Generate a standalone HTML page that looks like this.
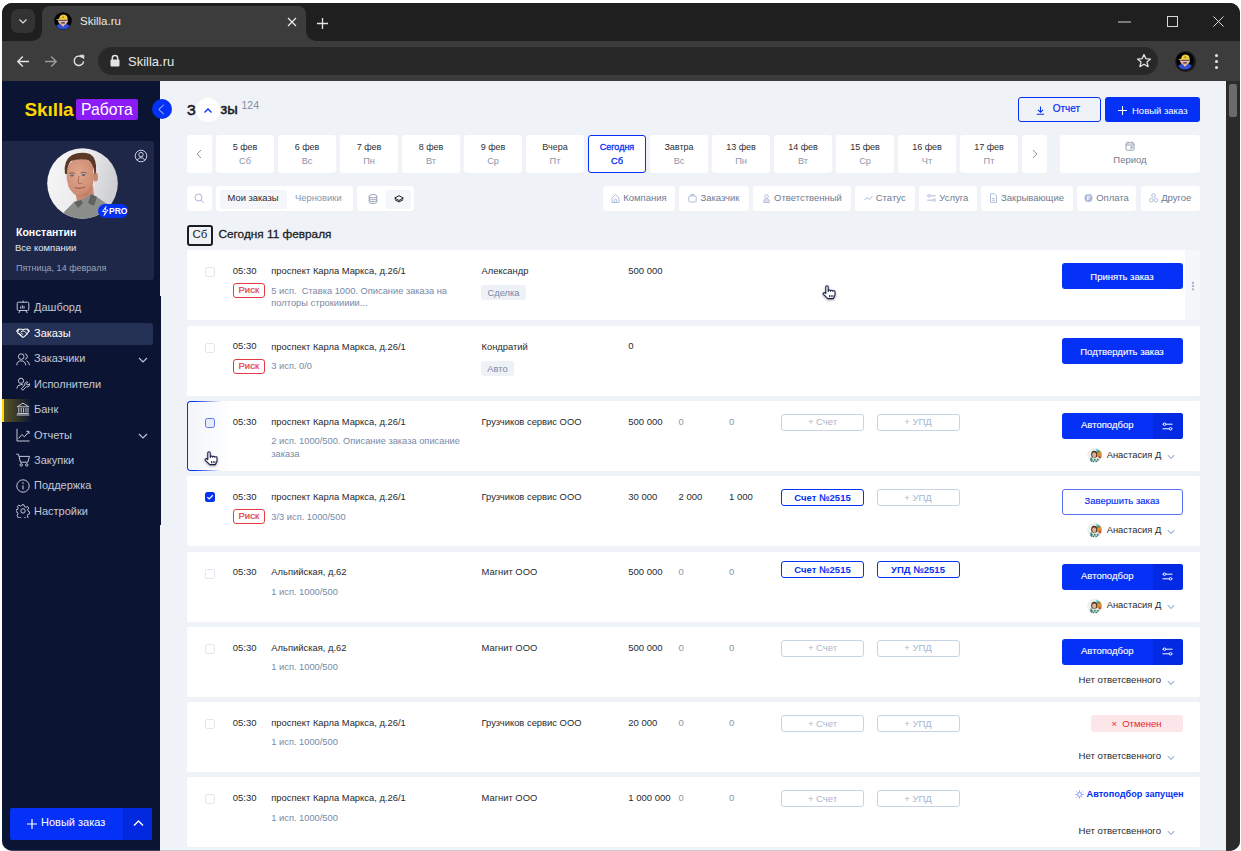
<!DOCTYPE html>
<html><head><meta charset="utf-8">
<style>
*{box-sizing:border-box;margin:0;padding:0}
html,body{width:1241px;height:851px;overflow:hidden;background:#fff;font-family:"Liberation Sans",sans-serif}
.a{position:absolute}
#win{position:absolute;left:0;top:0;width:1241px;height:851px;clip-path:inset(3px 1px 0.3px 2px round 10px);background:#202020}
#tabs{left:0;top:0;width:1241px;height:41px;background:#1f1f1f}
#tab{left:42px;top:6px;width:264px;height:35px;background:#3c3c3c;border-radius:8px 8px 0 0}
#toolbar{left:0;top:41px;width:1241px;height:40px;background:#3c3c3c}
#omni{left:98px;top:47px;width:1060px;height:28px;background:#282828;border-radius:14px}
#page{left:2px;top:81px;width:1224px;height:770px;background:#eff2f7;overflow:hidden}
#sb{left:2px;top:81px;width:158px;height:770px;background:#0b1533}
#scroll{left:1226px;top:81px;width:15px;height:770px;background:#2b2b2b}
#thumb{left:1229px;top:84px;width:8px;height:33px;background:#6b6b6b;border-radius:2px}
.t{white-space:nowrap;line-height:1}
</style></head><body>
<div id="win">
 <div class="a" id="tabs"></div>
 <div class="a" style="left:30px;top:30px;width:288px;height:11px;background:#3c3c3c"></div>
 <div class="a" style="left:12px;top:21px;width:30px;height:20px;background:#1f1f1f;border-bottom-right-radius:10px"></div>
 <div class="a" style="left:306px;top:21px;width:30px;height:20px;background:#1f1f1f;border-bottom-left-radius:10px"></div>
 <div class="a" style="left:11px;top:9px;width:24px;height:24px;background:#333;border-radius:7px"></div>
 <svg class="a" style="left:17px;top:15px" width="12" height="12" viewBox="0 0 12 12"><path d="M2.5 4.5L6 8l3.5-3.5" fill="none" stroke="#ddd" stroke-width="1.2"/></svg>
 <div class="a" id="tab"></div>
 <div class="a" style="left:55px;top:13px;width:16px;height:16px;border-radius:8px;background:#111"></div>
 <div class="a t" style="left:80px;top:15.5px;font-size:11.5px;color:#e8e8e8">Skilla.ru</div>
 <svg class="a" style="left:287px;top:17px" width="10" height="10" viewBox="0 0 10 10"><path d="M1 1l8 8M9 1l-8 8" stroke="#e6e6e6" stroke-width="1.3"/></svg>
 <svg class="a" style="left:316.5px;top:17.5px" width="11" height="11" viewBox="0 0 11 11"><path d="M5.5 0v11M0 5.5h11" stroke="#e6e6e6" stroke-width="1.3"/></svg>
 <!-- window controls -->
 <svg class="a" style="left:1118px;top:21px" width="13" height="2"><path d="M0 1h13" stroke="#d8d8d8" stroke-width="1"/></svg>
 <svg class="a" style="left:1166.5px;top:16px" width="11" height="11"><rect x="0.5" y="0.5" width="10" height="10" fill="none" stroke="#d8d8d8" stroke-width="1"/></svg>
 <svg class="a" style="left:1212.5px;top:16px" width="11" height="11"><path d="M0.5 0.5l10 10M10.5 0.5l-10 10" stroke="#d8d8d8" stroke-width="1"/></svg>
 <div class="a" id="toolbar"></div>
 <div class="a" id="omni"></div>
 <div class="a" id="page"></div>
 <div class="a" id="sb"></div>

 <!-- toolbar icons -->
 <svg class="a" style="left:16px;top:55px" width="14" height="13" viewBox="0 0 14 13"><path d="M13 6.5H1.8M6.8 1.5L1.8 6.5l5 5" fill="none" stroke="#e3e3e3" stroke-width="1.4"/></svg>
 <svg class="a" style="left:44px;top:55px" width="14" height="13" viewBox="0 0 14 13"><path d="M1 6.5h11.2M7.2 1.5l5 5-5 5" fill="none" stroke="#9a9a9a" stroke-width="1.4"/></svg>
 <svg class="a" style="left:72px;top:54px" width="14" height="14" viewBox="0 0 14 14"><path d="M11.6 7.2A4.7 4.7 0 1 1 10.2 3.4" fill="none" stroke="#e3e3e3" stroke-width="1.4"/><path d="M8.2 1.2h3.6v3.6z" fill="#e3e3e3" stroke="#e3e3e3" stroke-width="0.8"/></svg>
 <svg class="a" style="left:110px;top:54px" width="10" height="13" viewBox="0 0 10 13"><path d="M2.3 6V4.2a2.7 2.7 0 0 1 5.4 0V6" fill="none" stroke="#e3e3e3" stroke-width="1.5"/><rect x="0.5" y="5.5" width="9" height="7" rx="1" fill="#e3e3e3"/></svg>
 <div class="a t" style="left:128px;top:54.5px;font-size:13px;color:#e8e8e8">Skilla.ru</div>
 <svg class="a" style="left:1136px;top:53px" width="16" height="16" viewBox="0 0 16 16"><path d="M8 1.5l1.9 4.2 4.6.4-3.5 3 1.1 4.5L8 11.2l-4.1 2.4 1.1-4.5-3.5-3 4.6-.4z" fill="none" stroke="#e3e3e3" stroke-width="1.3" stroke-linejoin="round"/></svg>
 <div class="a" style="left:1174.5px;top:50.8px;width:21px;height:21px;border-radius:50%;background:#1b1b1b"></div>
 <svg class="a" style="left:1176px;top:52.3px" width="18" height="18" viewBox="0 0 18 18"><defs><clipPath id="fv2"><circle cx="9" cy="9" r="8.6"/></clipPath></defs><circle cx="9" cy="9" r="8.7" fill="#000"/><g clip-path="url(#fv2)"><path d="M1.5 18 L2.5 13.5 Q5 11.8 7 11.5 L9 15.5 L11 11.5 Q13.5 11.8 15.5 13.5 L16.5 18z" fill="#2f4fd6"/><path d="M4.3 8.5 Q4.3 7.2 5.6 7.2 L12.4 7.2 Q13.7 7.2 13.7 8.5 Q14.3 9.8 13.3 10.6 Q12.3 12.5 11 12.5 L9 15.3 L7 12.5 Q5.7 12.5 4.7 10.6 Q3.7 9.8 4.3 8.5z" fill="#e7b8a6"/><path d="M5.2 7.6h7.6v1.2H5.2z" fill="#27326b"/><path d="M7.2 10.2h3.6v1.2H7.2z" fill="#3b2f2f"/><path d="M2.2 7.6 Q3.5 6.6 5.2 6.8 Q5.5 3 9 2.6 Q13 2.6 13.6 6 L13.6 7.8 L4.8 7.8 Q3 8.2 2.2 7.6z" fill="#f0cd3a"/><ellipse cx="9.2" cy="5.2" rx="1.1" ry="0.6" fill="#8a6b12"/></g></svg>
 <div class="a" style="left:1215px;top:54px;width:3px;height:3px;border-radius:50%;background:#e3e3e3"></div>
 <div class="a" style="left:1215px;top:60px;width:3px;height:3px;border-radius:50%;background:#e3e3e3"></div>
 <div class="a" style="left:1215px;top:66px;width:3px;height:3px;border-radius:50%;background:#e3e3e3"></div>
 <!-- favicon -->
 <svg class="a" style="left:54.3px;top:12.3px" width="18" height="18" viewBox="0 0 18 18"><defs><clipPath id="fv1"><circle cx="9" cy="9" r="8.6"/></clipPath></defs><circle cx="9" cy="9" r="8.7" fill="#000"/><g clip-path="url(#fv1)"><path d="M1.5 18 L2.5 13.5 Q5 11.8 7 11.5 L9 15.5 L11 11.5 Q13.5 11.8 15.5 13.5 L16.5 18z" fill="#2f4fd6"/><path d="M4.3 8.5 Q4.3 7.2 5.6 7.2 L12.4 7.2 Q13.7 7.2 13.7 8.5 Q14.3 9.8 13.3 10.6 Q12.3 12.5 11 12.5 L9 15.3 L7 12.5 Q5.7 12.5 4.7 10.6 Q3.7 9.8 4.3 8.5z" fill="#e7b8a6"/><path d="M5.2 7.6h7.6v1.2H5.2z" fill="#27326b"/><path d="M7.2 10.2h3.6v1.2H7.2z" fill="#3b2f2f"/><path d="M2.2 7.6 Q3.5 6.6 5.2 6.8 Q5.5 3 9 2.6 Q13 2.6 13.6 6 L13.6 7.8 L4.8 7.8 Q3 8.2 2.2 7.6z" fill="#f0cd3a"/><ellipse cx="9.2" cy="5.2" rx="1.1" ry="0.6" fill="#8a6b12"/></g></svg>

 <!-- SIDEBAR -->
 <div class="a t" style="left:24.5px;top:100px;font-size:19px;font-weight:bold;color:#ffd600;letter-spacing:-0.1px">Skılla</div>
 <div class="a" style="left:76px;top:99px;width:62px;height:21px;background:#8b1cf6;border-radius:2px"></div>
 <div class="a t" style="left:81px;top:102.1px;font-size:15.7px;color:#fff">Работа</div>
 <div class="a" style="left:152px;top:99px;width:20px;height:20px;border-radius:50%;background:#0530f5"></div>
 <svg class="a" style="left:157px;top:104px" width="9" height="11" viewBox="0 0 9 11"><path d="M6.8 0.8L1.8 5.5l5 4.7" fill="none" stroke="#c9d3ff" stroke-width="1"/></svg>

 <div class="a" style="left:2px;top:141px;width:152px;height:139px;background:#1e2747;border-radius:0 3px 3px 0"></div>
 <svg class="a" style="left:47px;top:148px" width="71" height="71" viewBox="0 0 71 71">
  <defs><clipPath id="av"><circle cx="35.5" cy="35.5" r="35.3"/></clipPath>
  <linearGradient id="avbg" x1="0" y1="0" x2="1" y2="0.3"><stop offset="0" stop-color="#f7f7f8"/><stop offset="0.55" stop-color="#ececee"/><stop offset="1" stop-color="#cfd0d4"/></linearGradient>
  <radialGradient id="face" cx="0.45" cy="0.4" r="0.65"><stop offset="0" stop-color="#e0a68c"/><stop offset="0.8" stop-color="#cf8f76"/><stop offset="1" stop-color="#b8735e"/></radialGradient></defs>
  <g clip-path="url(#av)">
   <rect width="71" height="71" fill="url(#avbg)"/>
   <path d="M28 42 L30 53 L40 56 L47 48 L46 38z" fill="#c8876f"/>
   <path d="M10 71 L19 62 L27 54 L34 52 L44 46 L50 49 L60 56 L68 64 L71 71z" fill="#8b8f8c"/>
   <path d="M27 54 L31 60 L36 55 L34 52z M44 46 L41 55 L47 58 L50 49z" fill="#5f6461"/>
   <ellipse cx="48.5" cy="29" rx="2.6" ry="4.5" fill="#c98a72"/>
   <path d="M19.5 24 Q19 40 27 46 Q33 50 40 47 Q46 42 46.5 30 L46 16 Q40 10 30 11 Q21 13 19.5 24z" fill="url(#face)"/>
   <path d="M18 26 Q16 12 25 7 Q34 3 43 6 Q50 10 49 24 L47.5 27 Q47 15 41 12 Q32 10 24 13 Q20 17 20 26z" fill="#5a3a27"/>
   <path d="M22 25.5q3-1.5 6 0M33.5 25q3-1.5 6 0" stroke="#7d5a48" stroke-width="0.9" fill="none"/>
   <ellipse cx="25" cy="27.5" rx="1.8" ry="0.9" fill="#53687c"/><ellipse cx="36.5" cy="27" rx="1.8" ry="0.9" fill="#53687c"/>
   <path d="M32 28 L31 35 Q33 36.5 35 35" stroke="#a96a56" stroke-width="0.9" fill="none"/>
   <path d="M28 39.5 Q32.5 41.5 38 39" stroke="#a15c50" stroke-width="1.3" fill="none"/>
  </g>
 </svg>
 <div class="a" style="left:98px;top:204px;width:30px;height:14px;border-radius:7px;background:#0530f5"></div>
 <svg class="a" style="left:101px;top:206px" width="8" height="10" viewBox="0 0 8 10"><path d="M5 0.5L1.5 5.5h3L3 9.5 7 4H4z" fill="none" stroke="#fff" stroke-width="0.9" stroke-linejoin="round"/></svg>
 <div class="a t" style="left:109px;top:207px;font-size:8.5px;font-weight:bold;color:#fff">PRO</div>
 <svg class="a" style="left:134px;top:149px" width="14" height="14" viewBox="0 0 14 14"><circle cx="7" cy="7" r="5.8" fill="none" stroke="#c9cede" stroke-width="1"/><circle cx="7" cy="5.6" r="2.2" fill="none" stroke="#c9cede" stroke-width="1"/><path d="M3.2 11.2Q4.5 8.6 7 8.6T10.8 11.2" fill="none" stroke="#c9cede" stroke-width="1"/></svg>
 <div class="a t" style="left:16px;top:227px;font-size:10.5px;font-weight:bold;color:#fff">Константин</div>
 <div class="a t" style="left:15px;top:243px;font-size:9.5px;color:#e4e7ef">Все компании</div>
 <div class="a t" style="left:16px;top:263.5px;font-size:9px;color:#9ba3b8">Пятница, 14 февраля</div>

 <div class="a" style="left:160px;top:296px;width:1px;height:229px;background:#0b1533"></div>
 <div class="a" style="left:2px;top:323px;width:151px;height:22px;background:#253154;border-radius:0 3px 3px 0"></div>
 <div class="a" style="left:2px;top:399px;width:30px;height:23px;background:linear-gradient(90deg,rgba(255,214,0,0.35),rgba(255,214,0,0))"></div>
 <div class="a" style="left:2px;top:399px;width:2px;height:23px;background:#ffd600"></div>
<!-- MENU -->
 <svg class="a" style="left:15.5px;top:300.0px" width="14" height="14" viewBox="0 0 14 14"><rect x="1.2" y="2.2" width="11.6" height="8.3" rx="1.2" fill="none" stroke="#c3c8d6" stroke-width="1"/><path d="M4.6 8.2V7M6.3 8.2V5.6M8 8.2V6.3M7 1v1.2M4.2 10.5l-1.2 2.3M9.8 10.5l1.2 2.3" stroke="#c3c8d6" stroke-width="1" fill="none" stroke-linecap="round"/></svg>
 <div class="a t" style="left:34px;top:301.8px;font-size:11px;color:#c3c8d6">Дашборд</div>
 <svg class="a" style="left:15.5px;top:326.0px" width="14" height="14" viewBox="0 0 14 14"><path d="M0.6 5.2L2.6 3.2M13.4 5.2L11.4 3.2" stroke="#ffffff" stroke-width="1.1" fill="none" stroke-linecap="round"/><path d="M2.4 3.6Q4.5 2.4 6.6 3.6L7.4 3.6Q9.5 2.4 11.6 3.6L12.6 5.8Q11 8.5 8.2 10.6Q7 11.5 6 10.7L1.6 6.8z" fill="none" stroke="#ffffff" stroke-width="1.1" stroke-linejoin="round"/><path d="M5.2 5.6Q7 4.2 8.6 5.4L11 7.6M3.6 7.6l1.3 1.2M5 6.8l1.6 1.6M4.8 9.2l0.8 0.7" stroke="#ffffff" stroke-width="1" fill="none" stroke-linecap="round"/></svg>
 <div class="a t" style="left:34px;top:327.8px;font-size:11px;color:#ffffff">Заказы</div>
 <svg class="a" style="left:15.5px;top:351.5px" width="14" height="14" viewBox="0 0 14 14"><circle cx="5.2" cy="4.6" r="2.8" fill="none" stroke="#c3c8d6" stroke-width="1"/><path d="M0.7 12.8Q1.2 8.8 5.2 8.8T9.7 12.8" fill="none" stroke="#c3c8d6" stroke-width="1" stroke-linecap="round"/><path d="M9.3 1.9a2.8 2.8 0 0 1 0 5.4M11 9Q13 9.8 13.4 12.8" fill="none" stroke="#c3c8d6" stroke-width="1" stroke-linecap="round"/></svg>
 <div class="a t" style="left:34px;top:353.3px;font-size:11px;color:#c3c8d6">Заказчики</div>
 <svg class="a" style="left:15.5px;top:377.0px" width="14" height="14" viewBox="0 0 14 14"><circle cx="5" cy="3.8" r="2.6" fill="none" stroke="#c3c8d6" stroke-width="1"/><path d="M0.8 11.2Q1.3 7.6 5 7.6Q6.2 7.6 7 8" fill="none" stroke="#c3c8d6" stroke-width="1" stroke-linecap="round"/><path d="M6.8 13.3l3.6-3.6a2.3 2.3 0 0 0 3-3l-1.4 1.3-1.1-.3-.3-1.1 1.3-1.4a2.3 2.3 0 0 0-3 3L5.3 11.8z" fill="none" stroke="#c3c8d6" stroke-width="1" stroke-linejoin="round"/></svg>
 <div class="a t" style="left:34px;top:378.8px;font-size:11px;color:#c3c8d6">Исполнители</div>
 <svg class="a" style="left:15.5px;top:402.0px" width="14" height="14" viewBox="0 0 14 14"><path d="M1 4.8L7 1.2 13 4.8z" fill="none" stroke="#c3c8d6" stroke-width="1" stroke-linejoin="round"/><path d="M2.8 6v4.6M5.2 6v4.6M7.6 6v4.6M10 6v4.6M12 6v4.6M1.2 11.5h11.6M0.6 13h12.8" stroke="#c3c8d6" stroke-width="1"/></svg>
 <div class="a t" style="left:34px;top:403.8px;font-size:11px;color:#c3c8d6">Банк</div>
 <svg class="a" style="left:15.5px;top:428.0px" width="14" height="14" viewBox="0 0 14 14"><path d="M1 0.8v12.2h12.6" fill="none" stroke="#c3c8d6" stroke-width="1"/><path d="M2.6 10.4l3.3-3.9 2.5 2.3 4.4-5M10.3 3.3h2.7V6" fill="none" stroke="#c3c8d6" stroke-width="1" stroke-linejoin="round"/></svg>
 <div class="a t" style="left:34px;top:429.8px;font-size:11px;color:#c3c8d6">Отчеты</div>
 <svg class="a" style="left:15.5px;top:453.0px" width="14" height="14" viewBox="0 0 14 14"><path d="M0.3 1.2h2.2l1.9 8h7.4l1.7-5.8H3.2" fill="none" stroke="#c3c8d6" stroke-width="1" stroke-linejoin="round"/><circle cx="5.2" cy="11.9" r="1.2" fill="none" stroke="#c3c8d6" stroke-width="1"/><circle cx="10.8" cy="11.9" r="1.2" fill="none" stroke="#c3c8d6" stroke-width="1"/></svg>
 <div class="a t" style="left:34px;top:454.8px;font-size:11px;color:#c3c8d6">Закупки</div>
 <svg class="a" style="left:15.5px;top:478.5px" width="14" height="14" viewBox="0 0 14 14"><circle cx="7" cy="7" r="6.2" fill="none" stroke="#c3c8d6" stroke-width="1"/><path d="M7 6.2v4.3" stroke="#c3c8d6" stroke-width="1.1"/><circle cx="7" cy="4" r="0.8" fill="#c3c8d6"/></svg>
 <div class="a t" style="left:34px;top:480.3px;font-size:11px;color:#c3c8d6">Поддержка</div>
 <svg class="a" style="left:15.5px;top:504.0px" width="14" height="14" viewBox="0 0 14 14"><path d="M6 0.8h2l.4 1.8 1.4.7 1.7-.8 1.2 1.5-1 1.5.3 1.5 1.6.9v2l-1.7.5-.6 1.4.9 1.6-1.5 1.3-1.5-1-1.5.4-.6 1.7H6l-.5-1.7-1.4-.6-1.6.9L1.1 11.2l1-1.5-.5-1.4L0 7.8v-2l1.7-.4.5-1.4-.9-1.6L2.8 1.1l1.6 1L5.6 1.6z" fill="none" stroke="#c3c8d6" stroke-width="1" stroke-linejoin="round"/><circle cx="7" cy="6.9" r="2.2" fill="none" stroke="#c3c8d6" stroke-width="1"/></svg>
 <div class="a t" style="left:34px;top:505.8px;font-size:11px;color:#c3c8d6">Настройки</div>
 <svg class="a" style="left:138px;top:356.5px" width="10" height="6" viewBox="0 0 10 6"><path d="M1 1l4 4 4-4" fill="none" stroke="#c3c8d6" stroke-width="1.1"/></svg>
 <svg class="a" style="left:138px;top:433.0px" width="10" height="6" viewBox="0 0 10 6"><path d="M1 1l4 4 4-4" fill="none" stroke="#c3c8d6" stroke-width="1.1"/></svg>
<!-- /MENU -->
 <!-- bottom button -->
 <div class="a" style="left:10px;top:808px;width:142px;height:32px;background:#0530f5;border-radius:2px"></div>
 <div class="a" style="left:123px;top:808px;width:29px;height:32px;background:#0229e0;border-radius:0 2px 2px 0"></div>
 <svg class="a" style="left:27px;top:818px" width="10" height="12" viewBox="0 0 10 12"><path d="M5 1v10M0 6h10" stroke="#fff" stroke-width="1.2"/></svg>
 <div class="a t" style="left:41px;top:817px;font-size:11px;color:#fff">Новый заказ</div>
 <svg class="a" style="left:133px;top:819px" width="11" height="8" viewBox="0 0 11 8"><path d="M1 6.5L5.5 2 10 6.5" fill="none" stroke="#fff" stroke-width="1.4"/></svg>
 <!-- MAIN -->
 <div class="a t" style="left:187px;top:103.25px;font-size:14.5px;color:#15171c;font-weight:400;-webkit-text-stroke:0.5px #15171c">З</div>
 <div class="a t" style="left:220.5px;top:102.00px;font-size:14.6px;color:#15171c;font-weight:400;-webkit-text-stroke:0.5px #15171c">зы</div>
 <div class="a" style="left:195.5px;top:98px;width:24px;height:24px;background:#fff;border-radius:50%"></div>
 <svg class="a" style="left:202.5px;top:106.8px" width="10" height="7" viewBox="0 0 10 7"><path d="M1.5 5.5L5 2l3.5 3.5" fill="none" stroke="#0530f5" stroke-width="1.35"/></svg>
 <div class="a t" style="left:241.5px;top:100.25px;font-size:10.5px;color:#7f8da7;font-weight:400;">124</div>
 <div class="a" style="left:1018px;top:97px;width:83px;height:25px;background:transparent;border:1.5px solid #0530f5;border-radius:3px"></div>
 <svg class="a" style="left:1036px;top:105.5px" width="9" height="9" viewBox="0 0 9 9"><path d="M4.5 0.5v5.5M2 3.8l2.5 2.5L7 3.8M0.8 8.3h7.4" fill="none" stroke="#0530f5" stroke-width="1.1"/></svg>
 <div class="a t" style="left:1052.7px;top:104.00px;font-size:10px;color:#0530f5;font-weight:400;-webkit-text-stroke:0.2px #0530f5">Отчет</div>
 <div class="a" style="left:1105px;top:97px;width:95px;height:25px;background:#0530f5;border-radius:3px"></div>
 <svg class="a" style="left:1118px;top:105.5px" width="9" height="9" viewBox="0 0 9 9"><path d="M4.5 0v9M0 4.5h9" stroke="#fff" stroke-width="1.1"/></svg>
 <div class="a t" style="left:1132px;top:105.75px;font-size:9.5px;color:#fff;font-weight:400;">Новый заказ</div>
 <div class="a" style="left:187px;top:135px;width:25px;height:38px;background:#fff;border-radius:3px"></div>
 <svg class="a" style="left:196px;top:149px" width="6" height="10" viewBox="0 0 6 10"><path d="M5 1L1.2 5 5 9" fill="none" stroke="#8a95ab" stroke-width="1"/></svg>
 <div class="a" style="left:216px;top:135px;width:58px;height:38px;background:#fff;border-radius:3px"></div>
 <div class="a t" style="left:216px;top:143px;width:58px;text-align:center;font-size:9px;color:#2c2f36">5 фев</div>
 <div class="a t" style="left:216px;top:156.5px;width:58px;text-align:center;font-size:9.2px;color:#8a95ab">Сб</div>
 <div class="a" style="left:278px;top:135px;width:58px;height:38px;background:#fff;border-radius:3px"></div>
 <div class="a t" style="left:278px;top:143px;width:58px;text-align:center;font-size:9px;color:#2c2f36">6 фев</div>
 <div class="a t" style="left:278px;top:156.5px;width:58px;text-align:center;font-size:9.2px;color:#8a95ab">Вс</div>
 <div class="a" style="left:340px;top:135px;width:58px;height:38px;background:#fff;border-radius:3px"></div>
 <div class="a t" style="left:340px;top:143px;width:58px;text-align:center;font-size:9px;color:#2c2f36">7 фев</div>
 <div class="a t" style="left:340px;top:156.5px;width:58px;text-align:center;font-size:9.2px;color:#8a95ab">Пн</div>
 <div class="a" style="left:402px;top:135px;width:58px;height:38px;background:#fff;border-radius:3px"></div>
 <div class="a t" style="left:402px;top:143px;width:58px;text-align:center;font-size:9px;color:#2c2f36">8 фев</div>
 <div class="a t" style="left:402px;top:156.5px;width:58px;text-align:center;font-size:9.2px;color:#8a95ab">Вт</div>
 <div class="a" style="left:464px;top:135px;width:58px;height:38px;background:#fff;border-radius:3px"></div>
 <div class="a t" style="left:464px;top:143px;width:58px;text-align:center;font-size:9px;color:#2c2f36">9 фев</div>
 <div class="a t" style="left:464px;top:156.5px;width:58px;text-align:center;font-size:9.2px;color:#8a95ab">Ср</div>
 <div class="a" style="left:526px;top:135px;width:58px;height:38px;background:#fff;border-radius:3px"></div>
 <div class="a t" style="left:526px;top:143px;width:58px;text-align:center;font-size:9px;color:#2c2f36">Вчера</div>
 <div class="a t" style="left:526px;top:156.5px;width:58px;text-align:center;font-size:9.2px;color:#8a95ab">Пт</div>
 <div class="a" style="left:588px;top:135px;width:58px;height:38px;background:#fff;border:1.5px solid #0530f5;border-radius:3px"></div>
 <div class="a t" style="left:588px;top:143px;width:58px;text-align:center;font-size:9px;color:#0530f5;font-weight:400;-webkit-text-stroke:0.3px #0530f5">Сегодня</div>
 <div class="a t" style="left:588px;top:156.5px;width:58px;text-align:center;font-size:9.2px;color:#0530f5;font-weight:400;-webkit-text-stroke:0.3px #0530f5">Сб</div>
 <div class="a" style="left:650px;top:135px;width:58px;height:38px;background:#fff;border-radius:3px"></div>
 <div class="a t" style="left:650px;top:143px;width:58px;text-align:center;font-size:9px;color:#2c2f36">Завтра</div>
 <div class="a t" style="left:650px;top:156.5px;width:58px;text-align:center;font-size:9.2px;color:#8a95ab">Вс</div>
 <div class="a" style="left:712px;top:135px;width:58px;height:38px;background:#fff;border-radius:3px"></div>
 <div class="a t" style="left:712px;top:143px;width:58px;text-align:center;font-size:9px;color:#2c2f36">13 фев</div>
 <div class="a t" style="left:712px;top:156.5px;width:58px;text-align:center;font-size:9.2px;color:#8a95ab">Пн</div>
 <div class="a" style="left:774px;top:135px;width:58px;height:38px;background:#fff;border-radius:3px"></div>
 <div class="a t" style="left:774px;top:143px;width:58px;text-align:center;font-size:9px;color:#2c2f36">14 фев</div>
 <div class="a t" style="left:774px;top:156.5px;width:58px;text-align:center;font-size:9.2px;color:#8a95ab">Вт</div>
 <div class="a" style="left:836px;top:135px;width:58px;height:38px;background:#fff;border-radius:3px"></div>
 <div class="a t" style="left:836px;top:143px;width:58px;text-align:center;font-size:9px;color:#2c2f36">15 фев</div>
 <div class="a t" style="left:836px;top:156.5px;width:58px;text-align:center;font-size:9.2px;color:#8a95ab">Ср</div>
 <div class="a" style="left:898px;top:135px;width:58px;height:38px;background:#fff;border-radius:3px"></div>
 <div class="a t" style="left:898px;top:143px;width:58px;text-align:center;font-size:9px;color:#2c2f36">16 фев</div>
 <div class="a t" style="left:898px;top:156.5px;width:58px;text-align:center;font-size:9.2px;color:#8a95ab">Чт</div>
 <div class="a" style="left:960px;top:135px;width:58px;height:38px;background:#fff;border-radius:3px"></div>
 <div class="a t" style="left:960px;top:143px;width:58px;text-align:center;font-size:9px;color:#2c2f36">17 фев</div>
 <div class="a t" style="left:960px;top:156.5px;width:58px;text-align:center;font-size:9.2px;color:#8a95ab">Пт</div>
 <div class="a" style="left:1022px;top:135px;width:25px;height:38px;background:#fff;border-radius:3px"></div>
 <svg class="a" style="left:1032px;top:149px" width="6" height="10" viewBox="0 0 6 10"><path d="M1 1l3.8 4L1 9" fill="none" stroke="#8a95ab" stroke-width="1"/></svg>
 <div class="a" style="left:1060px;top:135px;width:140px;height:38px;background:#fff;border-radius:3px"></div>
 <svg class="a" style="left:1125px;top:141px" width="10" height="10" viewBox="0 0 10 10"><rect x="1" y="1.8" width="8" height="7.4" rx="1.2" fill="none" stroke="#8a95ab" stroke-width="0.9"/><path d="M1 4h8M3 0.5v2M7 0.5v2" stroke="#8a95ab" stroke-width="0.9"/><rect x="5.5" y="5.5" width="2" height="2" fill="#8a95ab"/></svg>
 <div class="a t" style="left:1060px;top:155px;width:140px;text-align:center;font-size:9.5px;color:#6f7b94">Период</div>
 <div class="a" style="left:187px;top:186px;width:25px;height:25px;background:#fff;border-radius:3px"></div>
 <svg class="a" style="left:194px;top:193px" width="11" height="11" viewBox="0 0 11 11"><circle cx="4.5" cy="4.5" r="3.5" fill="none" stroke="#a7b5d6" stroke-width="1"/><path d="M7 7l3 3" stroke="#a7b5d6" stroke-width="1"/></svg>
 <div class="a" style="left:216px;top:186px;width:137px;height:25px;background:#fff;border-radius:3px"></div>
 <div class="a" style="left:219.5px;top:189.5px;width:67.5px;height:19px;background:#f4f6fa;border-radius:3px"></div>
 <div class="a t" style="left:227.5px;top:193.10px;font-size:9.4px;color:#272a31;font-weight:400;">Мои заказы</div>
 <div class="a t" style="left:295px;top:193.10px;font-size:9.4px;color:#8a95ab;font-weight:400;">Черновики</div>
 <div class="a" style="left:357px;top:186px;width:57px;height:25px;background:#fff;border-radius:3px"></div>
 <div class="a" style="left:385.5px;top:189.5px;width:25.5px;height:19px;background:#f4f6fa;border-radius:3px"></div>
 <svg class="a" style="left:368px;top:194px" width="10" height="10" viewBox="0 0 10 10"><ellipse cx="5" cy="2.2" rx="3.8" ry="1.7" fill="none" stroke="#8a95ab" stroke-width="0.85"/><path d="M1.2 2.2v5.6c0 .9 1.7 1.7 3.8 1.7s3.8-.8 3.8-1.7V2.2M1.2 4.1c0 .9 1.7 1.7 3.8 1.7s3.8-.8 3.8-1.7M1.2 6c0 .9 1.7 1.7 3.8 1.7s3.8-.8 3.8-1.7" fill="none" stroke="#8a95ab" stroke-width="0.85"/></svg>
 <svg class="a" style="left:393.5px;top:195px" width="10" height="8" viewBox="0 0 10 8"><path d="M5 0.7l4.3 2.4L5 5.5 0.7 3.1z" fill="none" stroke="#1b1d22" stroke-width="1" stroke-linejoin="round"/><path d="M0.8 4.6L5 7l4.2-2.4" fill="none" stroke="#1b1d22" stroke-width="1"/></svg>
 <div class="a" style="left:603px;top:186px;width:72px;height:25px;background:#fff;border-radius:3px"></div>
 <div class="a t" style="left:603px;top:192.8px;width:72px;text-align:center;font-size:9.5px;color:#6f7b94"><svg width="9" height="10" viewBox="0 0 9 10" style="margin-right:3px;vertical-align:-2.5px"><path d="M1 9.5V5L4.5 1.5 8 5v4.5z" fill="none" stroke="#a9b6d6" stroke-width="0.9" stroke-linejoin="round"/><path d="M3.3 9.5V7.2a1.2 1.2 0 0 1 2.4 0v2.3" fill="none" stroke="#a9b6d6" stroke-width="0.9"/></svg>Компания</div>
 <div class="a" style="left:679px;top:186px;width:70px;height:25px;background:#fff;border-radius:3px"></div>
 <div class="a t" style="left:679px;top:192.8px;width:70px;text-align:center;font-size:9.5px;color:#6f7b94"><svg width="9" height="10" viewBox="0 0 9 10" style="margin-right:3px;vertical-align:-2.5px"><rect x="0.8" y="3" width="7.4" height="6" rx="1" fill="none" stroke="#a9b6d6" stroke-width="0.9"/><path d="M3 3V1.5h3V3" fill="none" stroke="#a9b6d6" stroke-width="0.9"/></svg>Заказчик</div>
 <div class="a" style="left:753px;top:186px;width:98px;height:25px;background:#fff;border-radius:3px"></div>
 <div class="a t" style="left:753px;top:192.8px;width:98px;text-align:center;font-size:9.5px;color:#6f7b94"><svg width="9" height="10" viewBox="0 0 9 10" style="margin-right:3px;vertical-align:-2.5px"><circle cx="4.5" cy="3.5" r="1.8" fill="none" stroke="#a9b6d6" stroke-width="0.9"/><path d="M1.5 8Q1.8 6 4.5 6T7.5 8z" fill="none" stroke="#a9b6d6" stroke-width="0.9"/><path d="M1 9.5h7" stroke="#a9b6d6" stroke-width="0.9"/></svg>Ответственный</div>
 <div class="a" style="left:855px;top:186px;width:59.5px;height:25px;background:#fff;border-radius:3px"></div>
 <div class="a t" style="left:855px;top:192.8px;width:59.5px;text-align:center;font-size:9.5px;color:#6f7b94"><svg width="9" height="10" viewBox="0 0 9 10" style="margin-right:3px;vertical-align:-2.5px"><path d="M0.5 7.2L3 4.6 5.2 6.3 8.6 3.2" fill="none" stroke="#a9b6d6" stroke-width="1" stroke-linejoin="round"/></svg>Статус</div>
 <div class="a" style="left:919px;top:186px;width:57.5px;height:25px;background:#fff;border-radius:3px"></div>
 <div class="a t" style="left:919px;top:192.8px;width:57.5px;text-align:center;font-size:9.5px;color:#6f7b94"><svg width="9" height="10" viewBox="0 0 9 10" style="margin-right:3px;vertical-align:-2.5px"><circle cx="1.8" cy="2.8" r="1.2" fill="none" stroke="#a9b6d6" stroke-width="0.9"/><path d="M3 2.8h5.7M0.3 7.2h5.8" stroke="#a9b6d6" stroke-width="0.9"/><circle cx="7.3" cy="7.2" r="1.2" fill="none" stroke="#a9b6d6" stroke-width="0.9"/></svg>Услуга</div>
 <div class="a" style="left:980.5px;top:186px;width:92.0px;height:25px;background:#fff;border-radius:3px"></div>
 <div class="a t" style="left:980.5px;top:192.8px;width:92.0px;text-align:center;font-size:9.5px;color:#6f7b94"><svg width="9" height="10" viewBox="0 0 9 10" style="margin-right:3px;vertical-align:-2.5px"><path d="M1.5 0.8h4l2 2v6.5h-6z" fill="none" stroke="#a9b6d6" stroke-width="0.9" stroke-linejoin="round"/><path d="M3 5.5h3M3 7.3h3" stroke="#a9b6d6" stroke-width="0.8"/></svg>Закрывающие</div>
 <div class="a" style="left:1077px;top:186px;width:59px;height:25px;background:#fff;border-radius:3px"></div>
 <div class="a t" style="left:1077px;top:192.8px;width:59px;text-align:center;font-size:9.5px;color:#6f7b94"><svg width="9" height="10" viewBox="0 0 9 10" style="margin-right:3px;vertical-align:-2.5px"><circle cx="4.5" cy="5" r="4" fill="#a9b6d6"/><path d="M3.7 7.5V2.8h1.3a1.1 1.1 0 0 1 0 2.2H3M2.8 6.2h2.4" fill="none" stroke="#fff" stroke-width="0.8"/></svg>Оплата</div>
 <div class="a" style="left:1140.5px;top:186px;width:59.5px;height:25px;background:#fff;border-radius:3px"></div>
 <div class="a t" style="left:1140.5px;top:192.8px;width:59.5px;text-align:center;font-size:9.5px;color:#6f7b94"><svg width="9" height="10" viewBox="0 0 9 10" style="margin-right:3px;vertical-align:-2.5px"><circle cx="4.5" cy="2.5" r="1.8" fill="none" stroke="#a9b6d6" stroke-width="0.9"/><circle cx="2.3" cy="7.2" r="1.8" fill="none" stroke="#a9b6d6" stroke-width="0.9"/><circle cx="6.8" cy="7.2" r="1.8" fill="none" stroke="#a9b6d6" stroke-width="0.9"/></svg>Другое</div>
 <div class="a" style="left:187px;top:224.5px;width:26px;height:21px;background:transparent;border:2px solid #1b1d22;border-radius:3px"></div>
 <div class="a t" style="left:187px;top:229.3px;width:26px;text-align:center;font-size:11.5px;color:#1b1d22">Сб</div>
 <div class="a t" style="left:218.5px;top:229.10px;font-size:11.8px;color:#1b1d22;font-weight:400;-webkit-text-stroke:0.3px #1b1d22">Сегодня 11 февраля</div>
 <div class="a" style="left:187px;top:250px;width:1013px;height:70px;background:#fff;border-radius:2px"></div>
 <div class="a" style="left:1185px;top:250px;width:15px;height:70px;background:#f5f7fb;border-radius:0 2px 2px 0"></div>
 <svg class="a" style="left:1190px;top:281px" width="6" height="11" viewBox="0 0 6 11"><circle cx="3" cy="2" r="1.15" fill="#a3b2cf"/><circle cx="3" cy="5.2" r="1.15" fill="#a3b2cf"/><circle cx="3" cy="8.4" r="1.15" fill="#a3b2cf"/></svg>
 <div class="a" style="left:205px;top:267px;width:10px;height:10px;background:#fff;border:1px solid #dfe4ee;border-radius:2.5px"></div>
 <div class="a t" style="left:232.8px;top:266.15px;font-size:9.5px;color:#272a31;font-weight:400;">05:30</div>
 <div class="a t" style="left:271.3px;top:266.20px;font-size:9.4px;color:#272a31;font-weight:400;">проспект Карла Маркса, д.26/1</div>
 <div class="a" style="left:232.8px;top:283.4px;width:32px;height:15px;background:#fff;border:1px solid #e53945;border-radius:3px"></div>
 <div class="a t" style="left:232.8px;top:285.30px;width:32px;text-align:center;font-size:9.5px;color:#e53945;-webkit-text-stroke:0.2px #e53945">Риск</div>
 <div class="a t" style="left:271.3px;top:286.65px;font-size:9.3px;color:#7889a9;font-weight:400;">5 исп.&nbsp; Ставка 1000. Описание заказа на</div>
 <div class="a t" style="left:271.3px;top:299.05px;font-size:9.3px;color:#7889a9;font-weight:400;">полторы строкиииии...</div>
 <div class="a t" style="left:481.5px;top:266.20px;font-size:9.4px;color:#272a31;font-weight:400;">Александр</div>
 <div class="a" style="left:481px;top:285.4px;width:45px;height:15px;background:#eef1f6;border-radius:3px"></div>
 <div class="a t" style="left:481px;top:288.40px;width:45px;text-align:center;font-size:9.4px;color:#7889a9">Сделка</div>
 <div class="a t" style="left:628.3px;top:266.15px;font-size:9.5px;color:#272a31;font-weight:400;">500 000</div>
 <div class="a" style="left:1061.5px;top:262.8px;width:121px;height:26px;background:#0530f5;border-radius:3px"></div>
 <div class="a t" style="left:1061.5px;top:271.50px;width:121px;text-align:center;font-size:9.5px;color:#fff;-webkit-text-stroke:0.12px #fff">Принять заказ</div>
 <div class="a" style="left:187px;top:326px;width:1013px;height:70px;background:#fff;border-radius:2px"></div>
 <div class="a" style="left:205px;top:343px;width:10px;height:10px;background:#fff;border:1px solid #dfe4ee;border-radius:2.5px"></div>
 <div class="a t" style="left:232.8px;top:341.45px;font-size:9.5px;color:#272a31;font-weight:400;">05:30</div>
 <div class="a t" style="left:271.3px;top:341.50px;font-size:9.4px;color:#272a31;font-weight:400;">проспект Карла Маркса, д.26/1</div>
 <div class="a" style="left:232.8px;top:358.7px;width:32px;height:15px;background:#fff;border:1px solid #e53945;border-radius:3px"></div>
 <div class="a t" style="left:232.8px;top:360.60px;width:32px;text-align:center;font-size:9.5px;color:#e53945;-webkit-text-stroke:0.2px #e53945">Риск</div>
 <div class="a t" style="left:271.3px;top:361.95px;font-size:9.3px;color:#7889a9;font-weight:400;">3 исп. 0/0</div>
 <div class="a t" style="left:481.5px;top:341.50px;font-size:9.4px;color:#272a31;font-weight:400;">Кондратий</div>
 <div class="a" style="left:481px;top:360.7px;width:33px;height:15px;background:#eef1f6;border-radius:3px"></div>
 <div class="a t" style="left:481px;top:363.70px;width:33px;text-align:center;font-size:9.4px;color:#7889a9">Авто</div>
 <div class="a t" style="left:628.3px;top:341.45px;font-size:9.5px;color:#272a31;font-weight:400;">0</div>
 <div class="a" style="left:1061.5px;top:338.09999999999997px;width:121px;height:26px;background:#0530f5;border-radius:3px"></div>
 <div class="a t" style="left:1061.5px;top:346.80px;width:121px;text-align:center;font-size:9.5px;color:#fff;-webkit-text-stroke:0.12px #fff">Подтвердить заказ</div>
 <div class="a" style="left:187px;top:401px;width:1013px;height:70px;background:#fff;border-radius:2px"></div>
 <div class="a" style="left:187px;top:401px;width:45px;height:70px;background:linear-gradient(90deg,#f3f5fa,#fff);border-radius:3px 0 0 3px"></div>
 <div class="a" style="left:187px;top:401px;width:40px;height:70px;background:transparent;border:1.3px solid #0530f5;border-right:none;border-radius:3px 0 0 3px;-webkit-mask-image:linear-gradient(90deg,#000 0,#000 8px,transparent 34px)"></div>
 <div class="a" style="left:205px;top:417.5px;width:10px;height:10.5px;background:#e8ebfa;border:1.2px solid #5b76f0;border-radius:2.5px"></div>
 <div class="a t" style="left:232.8px;top:416.75px;font-size:9.5px;color:#272a31;font-weight:400;">05:30</div>
 <div class="a t" style="left:271.3px;top:416.80px;font-size:9.4px;color:#272a31;font-weight:400;">проспект Карла Маркса, д.26/1</div>
 <div class="a t" style="left:271.3px;top:437.25px;font-size:9.3px;color:#7889a9;font-weight:400;">2 исп. 1000/500. Описание заказа описание</div>
 <div class="a t" style="left:271.3px;top:449.65px;font-size:9.3px;color:#7889a9;font-weight:400;">заказа</div>
 <div class="a t" style="left:481.5px;top:416.80px;font-size:9.4px;color:#272a31;font-weight:400;">Грузчиков сервис ООО</div>
 <div class="a t" style="left:628.3px;top:416.75px;font-size:9.5px;color:#272a31;font-weight:400;">500 000</div>
 <div class="a t" style="left:678.5px;top:416.75px;font-size:9.5px;color:#8a95ab;font-weight:400;">0</div>
 <div class="a t" style="left:729px;top:416.75px;font-size:9.5px;color:#8a95ab;font-weight:400;">0</div>
 <div class="a" style="left:781px;top:413.6px;width:83px;height:17px;background:#fff;border:1px solid #c9d3e8;border-radius:3px"></div>
 <div class="a t" style="left:781px;top:417.40px;width:83px;text-align:center;font-size:9.5px;color:#a9b5cf">+ Счет</div>
 <div class="a" style="left:876.5px;top:413.6px;width:83px;height:17px;background:#fff;border:1px solid #c9d3e8;border-radius:3px"></div>
 <div class="a t" style="left:876.5px;top:417.40px;width:83px;text-align:center;font-size:9.5px;color:#a9b5cf">+ УПД</div>
 <div class="a" style="left:1061.5px;top:413.3px;width:121px;height:26px;background:#0530f5;border-radius:3px"></div>
 <div class="a" style="left:1153px;top:413.3px;width:29.5px;height:26px;background:#0329e2;border-radius:0 3px 3px 0"></div>
 <div class="a t" style="left:1061.5px;top:420.40px;width:91.5px;text-align:center;font-size:9.5px;color:#fff;-webkit-text-stroke:0.12px #fff">Автоподбор</div>
 <svg class="a" style="left:1162px;top:421.50px" width="11" height="9" viewBox="0 0 11 9"><path d="M0.5 2.2h0.8M3.8 2.2h6.7M0.5 6.8h6.7M9.7 6.8h0.8" stroke="#fff" stroke-width="1"/><circle cx="2.5" cy="2.2" r="1.25" fill="none" stroke="#fff" stroke-width="1"/><circle cx="8.5" cy="6.8" r="1.25" fill="none" stroke="#fff" stroke-width="1"/></svg>
 <svg class="a" style="left:1087px;top:447.10px" width="16" height="16" viewBox="0 0 16 16"><defs><clipPath id="c401"><circle cx="7.6" cy="8" r="7.4"/></clipPath></defs><g clip-path="url(#c401)"><rect width="16" height="16" fill="#eef1ee"/><circle cx="11.8" cy="7" r="3.2" fill="#e0913c"/><circle cx="11.2" cy="4.2" r="1.5" fill="#3f9a6a"/><circle cx="13" cy="10" r="1.6" fill="#c85a3c"/><circle cx="10" cy="3" r="1.2" fill="#7fd0e0"/><ellipse cx="7.2" cy="7.6" rx="3" ry="3.8" fill="#4b2f1f"/><ellipse cx="7.2" cy="7.8" rx="2.1" ry="2.5" fill="#dcb597"/><path d="M2 16 L2.8 11.5 Q5 10.2 7.5 10.5 Q10.5 10.2 12.5 11.8 L13 16z" fill="#cfe3d8"/><path d="M4 12h1.5v1.5H4zM7 12h1.5v1.5H7zM10 12h1.5v1.5H10zM5.5 13.8h1.5v1.5H5.5zM8.5 13.8h1.5v1.5H8.5zM3.5 10.5l1.2 0 0 5h-1.2z" fill="#2f6f6a"/></g></svg>
 <div class="a t" style="left:1106.7px;top:449.60px;font-size:9.4px;color:#272a31;font-weight:400;">Анастасия Д</div>
 <svg class="a" style="left:1166.5px;top:453.80px" width="8" height="6" viewBox="0 0 8 6"><path d="M0.8 1.2L4 4.4l3.2-3.2" fill="none" stroke="#a3b3d8" stroke-width="1.15"/></svg>
 <div class="a" style="left:187px;top:476px;width:1013px;height:70px;background:#fff;border-radius:2px"></div>
 <div class="a" style="left:205px;top:492.3px;width:10px;height:10px;background:#0530f5;border-radius:2.5px"></div>
 <svg class="a" style="left:205px;top:492.3px" width="10" height="10" viewBox="0 0 10 10"><path d="M2.3 5.1l1.9 1.8 3.6-3.6" fill="none" stroke="#fff" stroke-width="1.3"/></svg>
 <div class="a t" style="left:232.8px;top:492.05px;font-size:9.5px;color:#272a31;font-weight:400;">05:30</div>
 <div class="a t" style="left:271.3px;top:492.10px;font-size:9.4px;color:#272a31;font-weight:400;">проспект Карла Маркса, д.26/1</div>
 <div class="a" style="left:232.8px;top:509.3px;width:32px;height:15px;background:#fff;border:1px solid #e53945;border-radius:3px"></div>
 <div class="a t" style="left:232.8px;top:511.20px;width:32px;text-align:center;font-size:9.5px;color:#e53945;-webkit-text-stroke:0.2px #e53945">Риск</div>
 <div class="a t" style="left:271.3px;top:512.55px;font-size:9.3px;color:#7889a9;font-weight:400;">3/3 исп. 1000/500</div>
 <div class="a t" style="left:481.5px;top:492.10px;font-size:9.4px;color:#272a31;font-weight:400;">Грузчиков сервис ООО</div>
 <div class="a t" style="left:628.3px;top:492.05px;font-size:9.5px;color:#272a31;font-weight:400;">30 000</div>
 <div class="a t" style="left:678.5px;top:492.05px;font-size:9.5px;color:#272a31;font-weight:400;">2 000</div>
 <div class="a t" style="left:729px;top:492.05px;font-size:9.5px;color:#272a31;font-weight:400;">1 000</div>
 <div class="a" style="left:781px;top:488.90000000000003px;width:83px;height:17px;background:#fff;border:1.5px solid #0530f5;border-radius:3px"></div>
 <div class="a t" style="left:781px;top:492.70px;width:83px;text-align:center;font-size:9.5px;color:#0530f5;font-weight:700">Счет №2515</div>
 <div class="a" style="left:876.5px;top:488.90000000000003px;width:83px;height:17px;background:#fff;border:1px solid #c9d3e8;border-radius:3px"></div>
 <div class="a t" style="left:876.5px;top:492.70px;width:83px;text-align:center;font-size:9.5px;color:#a9b5cf">+ УПД</div>
 <div class="a" style="left:1061.5px;top:488.8px;width:121px;height:26px;background:#fff;border:1.2px solid #5470f2;border-radius:3px"></div>
 <div class="a t" style="left:1061.5px;top:495.90px;width:121px;text-align:center;font-size:9.5px;color:#0530f5;-webkit-text-stroke:0.15px #0530f5">Завершить заказ</div>
 <svg class="a" style="left:1087px;top:522.40px" width="16" height="16" viewBox="0 0 16 16"><defs><clipPath id="c476"><circle cx="7.6" cy="8" r="7.4"/></clipPath></defs><g clip-path="url(#c476)"><rect width="16" height="16" fill="#eef1ee"/><circle cx="11.8" cy="7" r="3.2" fill="#e0913c"/><circle cx="11.2" cy="4.2" r="1.5" fill="#3f9a6a"/><circle cx="13" cy="10" r="1.6" fill="#c85a3c"/><circle cx="10" cy="3" r="1.2" fill="#7fd0e0"/><ellipse cx="7.2" cy="7.6" rx="3" ry="3.8" fill="#4b2f1f"/><ellipse cx="7.2" cy="7.8" rx="2.1" ry="2.5" fill="#dcb597"/><path d="M2 16 L2.8 11.5 Q5 10.2 7.5 10.5 Q10.5 10.2 12.5 11.8 L13 16z" fill="#cfe3d8"/><path d="M4 12h1.5v1.5H4zM7 12h1.5v1.5H7zM10 12h1.5v1.5H10zM5.5 13.8h1.5v1.5H5.5zM8.5 13.8h1.5v1.5H8.5zM3.5 10.5l1.2 0 0 5h-1.2z" fill="#2f6f6a"/></g></svg>
 <div class="a t" style="left:1106.7px;top:524.90px;font-size:9.4px;color:#272a31;font-weight:400;">Анастасия Д</div>
 <svg class="a" style="left:1166.5px;top:529.10px" width="8" height="6" viewBox="0 0 8 6"><path d="M0.8 1.2L4 4.4l3.2-3.2" fill="none" stroke="#a3b3d8" stroke-width="1.15"/></svg>
 <div class="a" style="left:187px;top:552px;width:1013px;height:70px;background:#fff;border-radius:2px"></div>
 <div class="a" style="left:205px;top:569px;width:10px;height:10px;background:#fff;border:1px solid #dfe4ee;border-radius:2.5px"></div>
 <div class="a t" style="left:232.8px;top:567.35px;font-size:9.5px;color:#272a31;font-weight:400;">05:30</div>
 <div class="a t" style="left:271.3px;top:567.40px;font-size:9.4px;color:#272a31;font-weight:400;">Альпийская, д.62</div>
 <div class="a t" style="left:271.3px;top:587.85px;font-size:9.3px;color:#7889a9;font-weight:400;">1 исп. 1000/500</div>
 <div class="a t" style="left:481.5px;top:567.40px;font-size:9.4px;color:#272a31;font-weight:400;">Магнит ООО</div>
 <div class="a t" style="left:628.3px;top:567.35px;font-size:9.5px;color:#272a31;font-weight:400;">500 000</div>
 <div class="a t" style="left:678.5px;top:567.35px;font-size:9.5px;color:#8a95ab;font-weight:400;">0</div>
 <div class="a t" style="left:729px;top:567.35px;font-size:9.5px;color:#8a95ab;font-weight:400;">0</div>
 <div class="a" style="left:781px;top:561.3000000000001px;width:83px;height:17px;background:#fff;border:1.5px solid #0530f5;border-radius:3px"></div>
 <div class="a t" style="left:781px;top:565.10px;width:83px;text-align:center;font-size:9.5px;color:#0530f5;font-weight:700">Счет №2515</div>
 <div class="a" style="left:876.5px;top:561.3000000000001px;width:83px;height:17px;background:#fff;border:1.5px solid #0530f5;border-radius:3px"></div>
 <div class="a t" style="left:876.5px;top:565.10px;width:83px;text-align:center;font-size:9.5px;color:#0530f5;font-weight:700">УПД №2515</div>
 <div class="a" style="left:1061.5px;top:563.9px;width:121px;height:26px;background:#0530f5;border-radius:3px"></div>
 <div class="a" style="left:1153px;top:563.9px;width:29.5px;height:26px;background:#0329e2;border-radius:0 3px 3px 0"></div>
 <div class="a t" style="left:1061.5px;top:571.00px;width:91.5px;text-align:center;font-size:9.5px;color:#fff;-webkit-text-stroke:0.12px #fff">Автоподбор</div>
 <svg class="a" style="left:1162px;top:572.10px" width="11" height="9" viewBox="0 0 11 9"><path d="M0.5 2.2h0.8M3.8 2.2h6.7M0.5 6.8h6.7M9.7 6.8h0.8" stroke="#fff" stroke-width="1"/><circle cx="2.5" cy="2.2" r="1.25" fill="none" stroke="#fff" stroke-width="1"/><circle cx="8.5" cy="6.8" r="1.25" fill="none" stroke="#fff" stroke-width="1"/></svg>
 <svg class="a" style="left:1087px;top:597.70px" width="16" height="16" viewBox="0 0 16 16"><defs><clipPath id="c551"><circle cx="7.6" cy="8" r="7.4"/></clipPath></defs><g clip-path="url(#c551)"><rect width="16" height="16" fill="#eef1ee"/><circle cx="11.8" cy="7" r="3.2" fill="#e0913c"/><circle cx="11.2" cy="4.2" r="1.5" fill="#3f9a6a"/><circle cx="13" cy="10" r="1.6" fill="#c85a3c"/><circle cx="10" cy="3" r="1.2" fill="#7fd0e0"/><ellipse cx="7.2" cy="7.6" rx="3" ry="3.8" fill="#4b2f1f"/><ellipse cx="7.2" cy="7.8" rx="2.1" ry="2.5" fill="#dcb597"/><path d="M2 16 L2.8 11.5 Q5 10.2 7.5 10.5 Q10.5 10.2 12.5 11.8 L13 16z" fill="#cfe3d8"/><path d="M4 12h1.5v1.5H4zM7 12h1.5v1.5H7zM10 12h1.5v1.5H10zM5.5 13.8h1.5v1.5H5.5zM8.5 13.8h1.5v1.5H8.5zM3.5 10.5l1.2 0 0 5h-1.2z" fill="#2f6f6a"/></g></svg>
 <div class="a t" style="left:1106.7px;top:600.20px;font-size:9.4px;color:#272a31;font-weight:400;">Анастасия Д</div>
 <svg class="a" style="left:1166.5px;top:604.40px" width="8" height="6" viewBox="0 0 8 6"><path d="M0.8 1.2L4 4.4l3.2-3.2" fill="none" stroke="#a3b3d8" stroke-width="1.15"/></svg>
 <div class="a" style="left:187px;top:627px;width:1013px;height:70px;background:#fff;border-radius:2px"></div>
 <div class="a" style="left:205px;top:644px;width:10px;height:10px;background:#fff;border:1px solid #dfe4ee;border-radius:2.5px"></div>
 <div class="a t" style="left:232.8px;top:642.65px;font-size:9.5px;color:#272a31;font-weight:400;">05:30</div>
 <div class="a t" style="left:271.3px;top:642.70px;font-size:9.4px;color:#272a31;font-weight:400;">Альпийская, д.62</div>
 <div class="a t" style="left:271.3px;top:663.15px;font-size:9.3px;color:#7889a9;font-weight:400;">1 исп. 1000/500</div>
 <div class="a t" style="left:481.5px;top:642.70px;font-size:9.4px;color:#272a31;font-weight:400;">Магнит ООО</div>
 <div class="a t" style="left:628.3px;top:642.65px;font-size:9.5px;color:#272a31;font-weight:400;">500 000</div>
 <div class="a t" style="left:678.5px;top:642.65px;font-size:9.5px;color:#8a95ab;font-weight:400;">0</div>
 <div class="a t" style="left:729px;top:642.65px;font-size:9.5px;color:#8a95ab;font-weight:400;">0</div>
 <div class="a" style="left:781px;top:639.5px;width:83px;height:17px;background:#fff;border:1px solid #c9d3e8;border-radius:3px"></div>
 <div class="a t" style="left:781px;top:643.30px;width:83px;text-align:center;font-size:9.5px;color:#a9b5cf">+ Счет</div>
 <div class="a" style="left:876.5px;top:639.5px;width:83px;height:17px;background:#fff;border:1px solid #c9d3e8;border-radius:3px"></div>
 <div class="a t" style="left:876.5px;top:643.30px;width:83px;text-align:center;font-size:9.5px;color:#a9b5cf">+ УПД</div>
 <div class="a" style="left:1061.5px;top:639.1999999999999px;width:121px;height:26px;background:#0530f5;border-radius:3px"></div>
 <div class="a" style="left:1153px;top:639.1999999999999px;width:29.5px;height:26px;background:#0329e2;border-radius:0 3px 3px 0"></div>
 <div class="a t" style="left:1061.5px;top:646.30px;width:91.5px;text-align:center;font-size:9.5px;color:#fff;-webkit-text-stroke:0.12px #fff">Автоподбор</div>
 <svg class="a" style="left:1162px;top:647.40px" width="11" height="9" viewBox="0 0 11 9"><path d="M0.5 2.2h0.8M3.8 2.2h6.7M0.5 6.8h6.7M9.7 6.8h0.8" stroke="#fff" stroke-width="1"/><circle cx="2.5" cy="2.2" r="1.25" fill="none" stroke="#fff" stroke-width="1"/><circle cx="8.5" cy="6.8" r="1.25" fill="none" stroke="#fff" stroke-width="1"/></svg>
 <div class="a t" style="left:1078.5px;top:675.40px;font-size:9.6px;color:#272a31;font-weight:400;">Нет ответсвенного</div>
 <svg class="a" style="left:1166.5px;top:679.70px" width="8" height="6" viewBox="0 0 8 6"><path d="M0.8 1.2L4 4.4l3.2-3.2" fill="none" stroke="#a3b3d8" stroke-width="1.15"/></svg>
 <div class="a" style="left:187px;top:702px;width:1013px;height:70px;background:#fff;border-radius:2px"></div>
 <div class="a" style="left:205px;top:719px;width:10px;height:10px;background:#fff;border:1px solid #dfe4ee;border-radius:2.5px"></div>
 <div class="a t" style="left:232.8px;top:717.95px;font-size:9.5px;color:#272a31;font-weight:400;">05:30</div>
 <div class="a t" style="left:271.3px;top:718.00px;font-size:9.4px;color:#272a31;font-weight:400;">проспект Карла Маркса, д.26/1</div>
 <div class="a t" style="left:271.3px;top:738.45px;font-size:9.3px;color:#7889a9;font-weight:400;">1 исп. 1000/500</div>
 <div class="a t" style="left:481.5px;top:718.00px;font-size:9.4px;color:#272a31;font-weight:400;">Грузчиков сервис ООО</div>
 <div class="a t" style="left:628.3px;top:717.95px;font-size:9.5px;color:#272a31;font-weight:400;">20 000</div>
 <div class="a t" style="left:678.5px;top:717.95px;font-size:9.5px;color:#8a95ab;font-weight:400;">0</div>
 <div class="a t" style="left:729px;top:717.95px;font-size:9.5px;color:#8a95ab;font-weight:400;">0</div>
 <div class="a" style="left:781px;top:714.8000000000001px;width:83px;height:17px;background:#fff;border:1px solid #c9d3e8;border-radius:3px"></div>
 <div class="a t" style="left:781px;top:718.60px;width:83px;text-align:center;font-size:9.5px;color:#a9b5cf">+ Счет</div>
 <div class="a" style="left:876.5px;top:714.8000000000001px;width:83px;height:17px;background:#fff;border:1px solid #c9d3e8;border-radius:3px"></div>
 <div class="a t" style="left:876.5px;top:718.60px;width:83px;text-align:center;font-size:9.5px;color:#a9b5cf">+ УПД</div>
 <div class="a" style="left:1090.5px;top:714.5px;width:92px;height:17.3px;background:#fde6ea;border-radius:3px"></div>
 <div class="a t" style="left:1090.5px;top:718.50px;width:92px;text-align:center;font-size:9.5px;color:#e3262f">×&nbsp; Отменен</div>
 <div class="a t" style="left:1078.5px;top:750.70px;font-size:9.6px;color:#272a31;font-weight:400;">Нет ответсвенного</div>
 <svg class="a" style="left:1166.5px;top:755.00px" width="8" height="6" viewBox="0 0 8 6"><path d="M0.8 1.2L4 4.4l3.2-3.2" fill="none" stroke="#a3b3d8" stroke-width="1.15"/></svg>
 <div class="a" style="left:187px;top:777px;width:1013px;height:70px;background:#fff;border-radius:2px"></div>
 <div class="a" style="left:205px;top:794px;width:10px;height:10px;background:#fff;border:1px solid #dfe4ee;border-radius:2.5px"></div>
 <div class="a t" style="left:232.8px;top:793.25px;font-size:9.5px;color:#272a31;font-weight:400;">05:30</div>
 <div class="a t" style="left:271.3px;top:793.30px;font-size:9.4px;color:#272a31;font-weight:400;">проспект Карла Маркса, д.26/1</div>
 <div class="a t" style="left:271.3px;top:813.75px;font-size:9.3px;color:#7889a9;font-weight:400;">1 исп. 1000/500</div>
 <div class="a t" style="left:481.5px;top:793.30px;font-size:9.4px;color:#272a31;font-weight:400;">Магнит ООО</div>
 <div class="a t" style="left:628.3px;top:793.25px;font-size:9.5px;color:#272a31;font-weight:400;">1 000 000</div>
 <div class="a t" style="left:678.5px;top:793.25px;font-size:9.5px;color:#8a95ab;font-weight:400;">0</div>
 <div class="a t" style="left:729px;top:793.25px;font-size:9.5px;color:#8a95ab;font-weight:400;">0</div>
 <div class="a" style="left:781px;top:790.1px;width:83px;height:17px;background:#fff;border:1px solid #c9d3e8;border-radius:3px"></div>
 <div class="a t" style="left:781px;top:793.90px;width:83px;text-align:center;font-size:9.5px;color:#a9b5cf">+ Счет</div>
 <div class="a" style="left:876.5px;top:790.1px;width:83px;height:17px;background:#fff;border:1px solid #c9d3e8;border-radius:3px"></div>
 <div class="a t" style="left:876.5px;top:793.90px;width:83px;text-align:center;font-size:9.5px;color:#a9b5cf">+ УПД</div>
 <svg class="a" style="left:1074.5px;top:790.00px" width="9" height="9" viewBox="0 0 9 9"><circle cx="4.5" cy="4.5" r="1.9" fill="none" stroke="#6f86f2" stroke-width="0.8"/><path d="M4.5 0.3v1.6M4.5 7.1v1.6M0.3 4.5h1.6M7.1 4.5h1.6M1.5 1.5l1.1 1.1M6.4 6.4l1.1 1.1M1.5 7.5l1.1-1.1M6.4 2.6l1.1-1.1" stroke="#6f86f2" stroke-width="0.8"/></svg>
 <div class="a t" style="left:1086.5px;top:789.80px;font-size:9.2px;color:#0530f5;font-weight:700;">Автоподбор запущен</div>
 <div class="a t" style="left:1078.5px;top:826.00px;font-size:9.6px;color:#272a31;font-weight:400;">Нет ответсвенного</div>
 <svg class="a" style="left:1166.5px;top:830.30px" width="8" height="6" viewBox="0 0 8 6"><path d="M0.8 1.2L4 4.4l3.2-3.2" fill="none" stroke="#a3b3d8" stroke-width="1.15"/></svg>
 <svg class="a" style="left:821.5px;top:284.5px;filter:drop-shadow(0.5px 1.2px 0.8px rgba(0,0,0,0.35))" width="15" height="16" viewBox="0 0 15 16"><path d="M3.8 8.6V1.9a1.2 1.2 0 0 1 2.4 0v4.7l.3-.9a1.1 1.1 0 0 1 2.1.4l.2-.3a1.1 1.1 0 0 1 2 .5l.3-.2a1.1 1.1 0 0 1 1.9.8v3.3l-1.6 3.4H5.8L1.2 9.2a1.1 1.1 0 0 1 1.6-1.4z" fill="#fff" stroke="#1d2148" stroke-width="1.1" stroke-linejoin="round"/><path d="M7.5 10v2.3M9.2 10v2.3M10.9 10v2.3" stroke="#1d2148" stroke-width="0.9"/></svg>
 <svg class="a" style="left:203.5px;top:451px;filter:drop-shadow(0.5px 1.2px 0.8px rgba(0,0,0,0.35))" width="15" height="16" viewBox="0 0 15 16"><path d="M3.8 8.6V1.9a1.2 1.2 0 0 1 2.4 0v4.7l.3-.9a1.1 1.1 0 0 1 2.1.4l.2-.3a1.1 1.1 0 0 1 2 .5l.3-.2a1.1 1.1 0 0 1 1.9.8v3.3l-1.6 3.4H5.8L1.2 9.2a1.1 1.1 0 0 1 1.6-1.4z" fill="#fff" stroke="#1d2148" stroke-width="1.1" stroke-linejoin="round"/><path d="M7.5 10v2.3M9.2 10v2.3M10.9 10v2.3" stroke="#1d2148" stroke-width="0.9"/></svg>
<!-- /MAIN -->
 <div class="a" id="scroll"></div>
 <div class="a" id="thumb"></div>
</div>
</body></html>
